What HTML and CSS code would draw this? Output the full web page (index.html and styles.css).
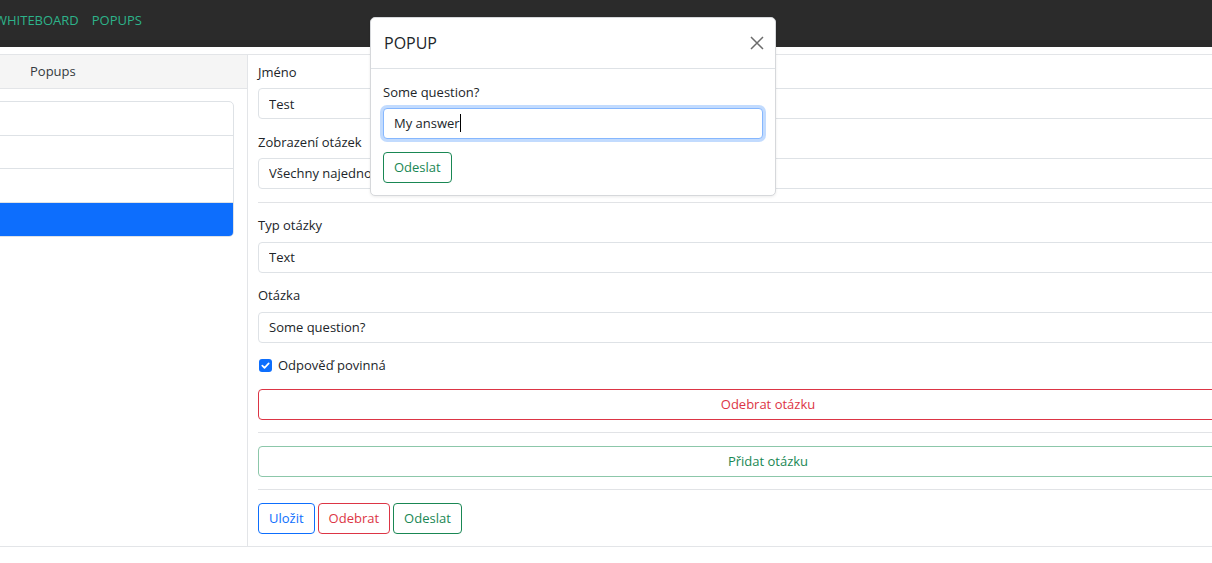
FILE: index.html
```html
<!DOCTYPE html>
<html lang="cs">
<head>
<meta charset="utf-8">
<title>Popups</title>
<link rel="stylesheet" href="styles.css">
</head>
<body>
<div class="page">
  <nav class="navbar">
    <a class="nav-link" href="#">WHITEBOARD</a>
    <a class="nav-link" href="#">POPUPS</a>
  </nav>
  <div class="main">
    <aside class="sidebar">
      <div class="sidebar-header">Popups</div>
      <ul class="list-group">
        <li class="list-item">&nbsp;</li>
        <li class="list-item">&nbsp;</li>
        <li class="list-item">&nbsp;</li>
        <li class="list-item active">&nbsp;</li>
      </ul>
    </aside>
    <section class="editor">
      <div class="field">
        <label class="form-label">Jméno</label>
        <input class="form-control" type="text" value="Test">
      </div>
      <div class="field">
        <label class="form-label">Zobrazení otázek</label>
        <select class="form-control form-select"><option>Všechny najednou</option></select>
      </div>
      <hr class="divider">
      <div class="field">
        <label class="form-label">Typ otázky</label>
        <input class="form-control" type="text" value="Text">
      </div>
      <div class="field">
        <label class="form-label">Otázka</label>
        <input class="form-control" type="text" value="Some question?">
      </div>
      <div class="check-row">
        <span class="checkbox"><svg viewBox="0 0 13 13" width="13" height="13"><path d="M3.3 6.7 L5.5 8.9 L9.7 4.4" fill="none" stroke="#fff" stroke-width="1.7" stroke-linecap="round" stroke-linejoin="round"/></svg></span>
        <span>Odpověď povinná</span>
      </div>
      <button class="btn btn-danger btn-block">Odebrat otázku</button>
      <hr class="divider">
      <button class="btn btn-success btn-block btn-soft">Přidat otázku</button>
      <hr class="divider">
      <div class="actions">
        <button class="btn btn-primary">Uložit</button>
        <button class="btn btn-danger">Odebrat</button>
        <button class="btn btn-success">Odeslat</button>
      </div>
    </section>
  </div>
</div>

<div class="modal">
  <div class="modal-header">
    <span class="modal-title">POPUP</span>
    <span class="close"><svg viewBox="0 0 14 14" width="14" height="14"><path d="M1 1 L13 13 M13 1 L1 13" stroke="#6c6c6c" stroke-width="1.5" fill="none"/></svg></span>
  </div>
  <div class="modal-body">
    <label class="form-label">Some question?</label>
    <div class="form-control focused">My answer<span class="caret"></span></div>
    <button class="btn btn-success">Odeslat</button>
  </div>
</div>
</body>
</html>
```

FILE: styles.css
```css
* { box-sizing: border-box; }
html, body { margin: 0; padding: 0; }
body {
  font-family: "Open Sans", "Noto Sans", sans-serif;
  font-size: 13px;
  line-height: 21px;
  color: #212529;
  background: #fff;
  overflow: hidden;
  width: 1212px;
  height: 563px;
}
.page {
  margin-left: -40px;
  width: 1328px;
}
.navbar {
  height: 47px;
  background: #2b2b2b;
  display: flex;
  align-items: flex-start;
  padding: 10px 0 0 35px;
  gap: 13px;
}
.nav-link {
  color: #2db38a;
  text-decoration: none;
  font-size: 13px;
}
.main {
  margin-top: 7px;
  display: flex;
  border-top: 1px solid #e3e5e8;
  border-bottom: 1px solid #e3e5e8;
}
.sidebar {
  width: 288px;
  flex: none;
  border-right: 1px solid #e3e5e8;
}
.sidebar-header {
  height: 34px;
  background: #f5f5f5;
  border-bottom: 1px solid #e3e5e8;
  padding-left: 70px;
  line-height: 33px;
  color: #343a40;
}
.list-group {
  list-style: none;
  margin: 12px 13px 0 12px;
  padding: 0;
  border: 1px solid #dee2e6;
  border-radius: 5px;
  overflow: hidden;
}
.list-item {
  height: 33.5px;
  border-bottom: 1px solid #dee2e6;
}
.list-item:last-child { border-bottom: none; }
.list-item.active {
  background: #0d6efd;
  border-color: #0d6efd;
}
.editor {
  width: 1040px;
  flex: none;
  padding: 6.5px 10px 12.5px;
  display: flex;
  flex-direction: column;
}
.field { margin-bottom: 12.5px; }
.form-label {
  display: block;
  margin-bottom: 5.5px;
  line-height: 21px;
}
.form-control {
  display: block;
  width: 100%;
  height: 31px;
  padding: 4px 10px;
  font-family: inherit;
  font-size: 13px;
  line-height: 21px;
  color: #212529;
  background: #fff;
  border: 1px solid #dee2e6;
  border-radius: 4px;
  outline: none;
}
.form-select {
  appearance: none;
  -webkit-appearance: none;
}
.divider {
  margin: 0 0 12.5px;
  border: none;
  border-top: 1px solid #e1e3e6;
  height: 0;
}
.check-row {
  display: flex;
  align-items: center;
  gap: 6px;
  height: 21px;
  margin-bottom: 12.5px;
  padding-left: 1px;
}
.checkbox {
  width: 13px;
  height: 13px;
  border-radius: 3px;
  background: #0d6efd;
  display: inline-flex;
}
.btn {
  font-family: inherit;
  font-size: 13px;
  line-height: 21px;
  height: 31px;
  padding: 4px 10px;
  background: #fff;
  border: 1px solid;
  border-radius: 4px;
  cursor: pointer;
}
.btn-block {
  width: 100%;
  margin-bottom: 12.5px;
}
.btn-primary { color: #0d6efd; border-color: #0d6efd; }
.btn-danger { color: #dc3545; border-color: #dc3545; }
.btn-success { color: #198754; border-color: #198754; }
.btn-soft { border-color: #8cc7aa; }
.actions {
  display: flex;
  gap: 3px;
}
.modal {
  position: absolute;
  left: 370px;
  top: 17px;
  width: 406px;
  background: #fff;
  border: 1px solid #d6d8db;
  border-radius: 5px;
  box-shadow: 0 1px 3px rgba(0,0,0,0.08);
}
.modal-header {
  display: flex;
  align-items: center;
  justify-content: space-between;
  padding: 12px 11px 12px 13px;
  border-bottom: 1px solid #dee2e6;
  height: 51px;
}
.modal-title {
  font-size: 16px;
  line-height: 26px;
}
.close {
  display: inline-flex;
  width: 14px;
  height: 14px;
}
.modal-body {
  padding: 12.5px 12px 12px;
}
.modal-body .form-control { margin-bottom: 13px; }
.focused {
  border-color: #86b7fe;
  box-shadow: 0 0 0 3px rgba(13,110,253,0.25);
}
.caret {
  display: inline-block;
  width: 1px;
  height: 18px;
  background: #000;
  vertical-align: -4px;
}
```
